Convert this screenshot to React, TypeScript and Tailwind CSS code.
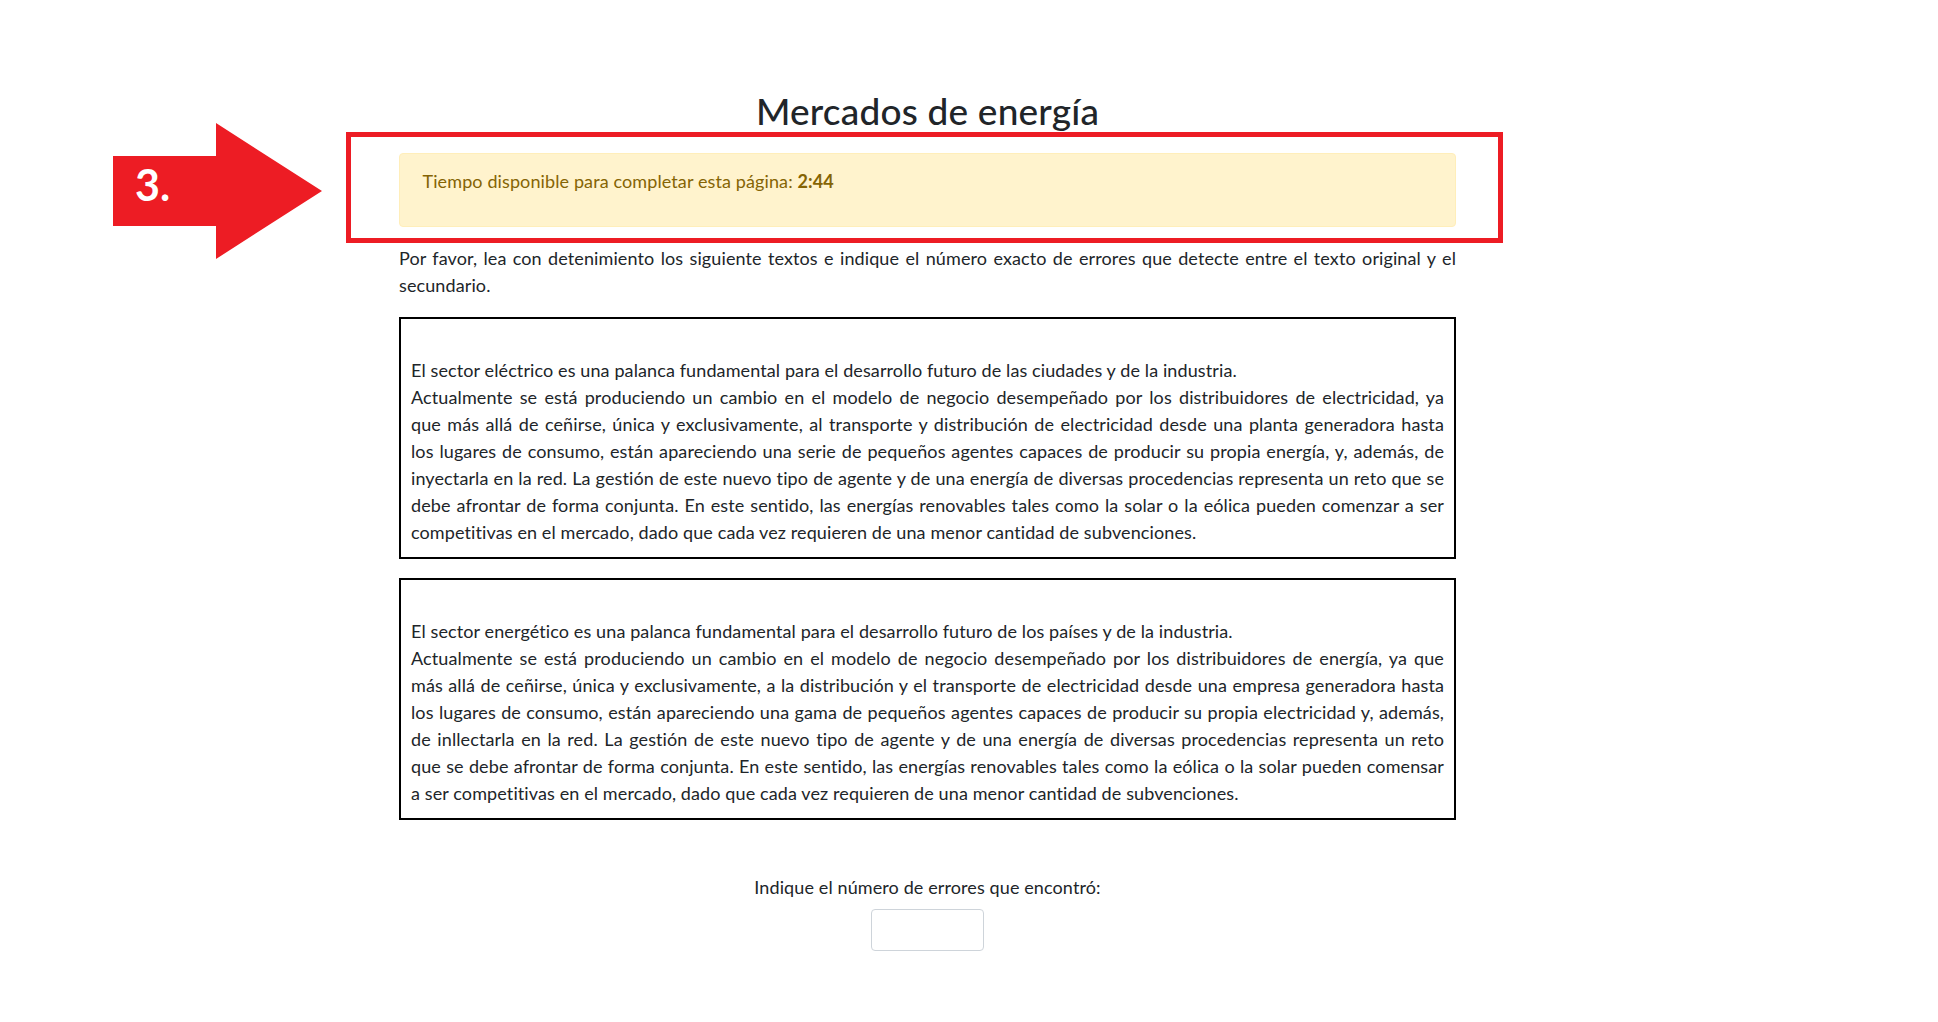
import React from "react";

const FONT = "font-['Lato','Liberation_Sans',sans-serif]";

// each line of the original justified block, kept as in the page
const Lines = ({ lines }: { lines: string[] }) => (
  <>
    {lines.map((l, i) => (
      <span
        key={i}
        className={i < lines.length - 1 ? "block text-justify [text-align-last:justify]" : "block"}
      >
        {l}
      </span>
    ))}
  </>
);

const TextBox = ({ first, lines }: { first: string; lines: string[] }) => (
  <div className="border-2 border-black px-[10px] pt-[11px] pb-[11px] mb-[19px]">
    <br />
    <span className="block">{first}</span>
    <Lines lines={lines} />
  </div>
);

const box1 = [
  "Actualmente se está produciendo un cambio en el modelo de negocio desempeñado por los distribuidores de electricidad, ya",
  "que más allá de ceñirse, única y exclusivamente, al transporte y distribución de electricidad desde una planta generadora hasta",
  "los lugares de consumo, están apareciendo una serie de pequeños agentes capaces de producir su propia energía, y, además, de",
  "inyectarla en la red. La gestión de este nuevo tipo de agente y de una energía de diversas procedencias representa un reto que se",
  "debe afrontar de forma conjunta. En este sentido, las energías renovables tales como la solar o la eólica pueden comenzar a ser",
  "competitivas en el mercado, dado que cada vez requieren de una menor cantidad de subvenciones.",
];

const box2 = [
  "Actualmente se está produciendo un cambio en el modelo de negocio desempeñado por los distribuidores de energía, ya que",
  "más allá de ceñirse, única y exclusivamente, a la distribución y el transporte de electricidad desde una empresa generadora hasta",
  "los lugares de consumo, están apareciendo una gama de pequeños agentes capaces de producir su propia electricidad y, además,",
  "de inllectarla en la red. La gestión de este nuevo tipo de agente y de una energía de diversas procedencias representa un reto",
  "que se debe afrontar de forma conjunta. En este sentido, las energías renovables tales como la eólica o la solar pueden comensar",
  "a ser competitivas en el mercado, dado que cada vez requieren de una menor cantidad de subvenciones.",
];

const App = () => {
  return (
    <div className={`relative min-h-[1022px] bg-white text-[#212529] text-[18px] leading-[27px] tracking-[0.11px] ${FONT}`}>
      {/* annotation: arrow + red frame */}
      <div className="absolute left-[112px] top-[122px] w-[212px] h-[140px]">
        <svg width="212" height="140" viewBox="0 0 212 140">
          <polygon points="1,34 104,34 104,1 210,69 104,137 104,104 1,104" fill="#ed1c24" />
        </svg>
        <span className="absolute left-[23px] top-[38px] text-white font-bold text-[43px] leading-[50px] tracking-normal">3.</span>
      </div>
      <div className="absolute left-[346px] top-[132px] w-[1157px] h-[111px] border-[5px] border-[#ed1c24]" />

      <div className="pl-[399px] pt-[89px]">
        <div className="w-[1057px]">
          <h2 className="text-center text-[37px] leading-[43px] font-medium tracking-[0.2px] mb-[21px]">Mercados de energía</h2>

          <div className="bg-[#fff3cd] border border-[#ffeeba] rounded-[4px] text-[#856404] px-[22.5px] py-[13.5px] mb-[18px]">
            <p className="mb-[18px]">
              Tiempo disponible para completar esta página: <b>2:44</b>
            </p>
          </div>

          <p className="text-justify mb-[18px]">
            Por favor, lea con detenimiento los siguiente textos e indique el número exacto de errores que detecte entre el texto original y el secundario.
          </p>

          <TextBox
            first="El sector eléctrico es una palanca fundamental para el desarrollo futuro de las ciudades y de la industria."
            lines={box1}
          />
          <TextBox
            first="El sector energético es una palanca fundamental para el desarrollo futuro de los países y de la industria."
            lines={box2}
          />

          <div className="flex flex-col items-center pt-[35px]">
            <label className="mb-[8px]">Indique el número de errores que encontró:</label>
            <input
              type="text"
              className="w-[113px] h-[42px] border border-[#ced4da] rounded-[4px] outline-none"
            />
          </div>
        </div>
      </div>
    </div>
  );
};

export default App;
